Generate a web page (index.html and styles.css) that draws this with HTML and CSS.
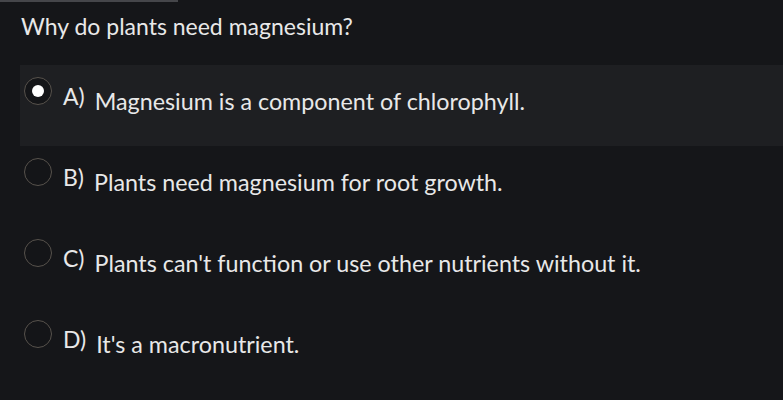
FILE: index.html
```html
<!DOCTYPE html>
<html>
<head>
<meta charset="utf-8">
<link rel="stylesheet" href="styles.css">
</head>
<body>
<div class="topline"></div>
<div class="quiz">
  <h1 class="question">Why do plants need magnesium?</h1>
  <div class="options">
    <div class="option selected">
      <span class="radio"><span class="dot"></span></span>
      <span class="label">A)</span>
      <span class="text">Magnesium is a component of chlorophyll.</span>
    </div>
    <div class="option">
      <span class="radio"></span>
      <span class="label">B)</span>
      <span class="text">Plants need magnesium for root growth.</span>
    </div>
    <div class="option">
      <span class="radio"></span>
      <span class="label">C)</span>
      <span class="text">Plants can't function or use other nutrients without it.</span>
    </div>
    <div class="option">
      <span class="radio"></span>
      <span class="label">D)</span>
      <span class="text">It's a macronutrient.</span>
    </div>
  </div>
</div>
</body>
</html>
```
FILE: styles.css
```css
html, body {
  margin: 0;
  padding: 0;
  background: #151619;
  height: 100%;
  overflow: hidden;
}
body {
  font-family: Lato, "Open Sans", sans-serif;
  color: #e6e6e6;
}
.topline {
  width: 178px;
  height: 2px;
  background: #45464a;
}
.quiz {
  padding-left: 20px;
}
.question {
  margin: 0;
  padding: 10px 0 0 1px;
  font-size: 23px;
  font-weight: 400;
  line-height: 28px;
  color: #e8e8e8;
}
.options {
  margin-top: 25px;
  display: flex;
  flex-direction: column;
}
.option {
  height: 81px;
  box-sizing: border-box;
  display: flex;
  align-items: flex-start;
  padding-left: 4px;
}
.option.selected {
  background: #1e1f22;
}
.radio {
  flex: none;
  width: 28px;
  height: 28px;
  margin-top: 12px;
  border: 1.5px solid #57524c;
  border-radius: 50%;
  box-sizing: border-box;
  display: flex;
  align-items: center;
  justify-content: center;
  background: #141518;
}
.dot {
  width: 12px;
  height: 12px;
  border-radius: 50%;
  background: #ffffff;
}
.label {
  font-size: 23px;
  line-height: 28px;
  margin-left: 11px;
  margin-top: 17px;
  color: #e8e8e8;
}
.text {
  font-size: 23.3px;
  line-height: 28px;
  margin-left: 10px;
  margin-top: 22px;
  color: #e8e8e8;
}
```
